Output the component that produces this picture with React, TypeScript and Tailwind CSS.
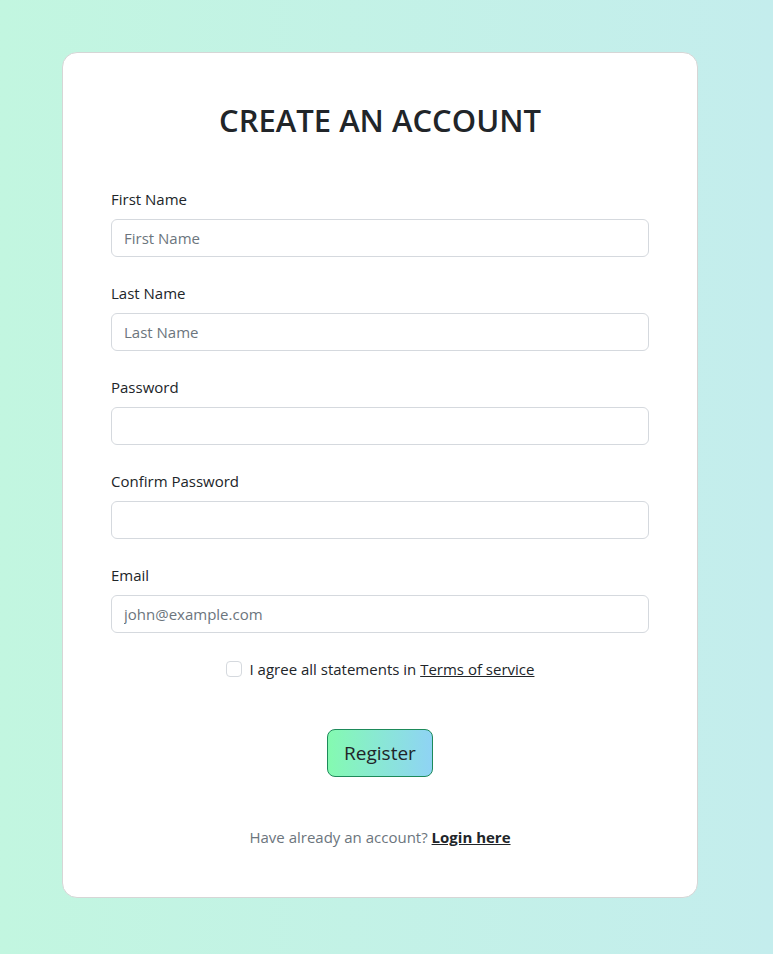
import React from "react";

const font = { fontFamily: '"Open Sans", "Noto Sans", sans-serif' };

function Field({ label, placeholder, type = "text" }: { label: string; placeholder?: string; type?: string }) {
  return (
    <div className="mb-6">
      <label className="mb-2 block text-[15px] leading-6 text-[#212529]">{label}</label>
      <input
        type={type}
        placeholder={placeholder}
        className="block h-[38px] w-full rounded-[6px] border border-[#d5d9de] bg-white px-3 text-[15px] leading-6 text-[#212529] outline-none placeholder:text-[#6c757d]"
      />
    </div>
  );
}

export default function App() {
  return (
    <div
      className="min-h-[954px] w-full bg-linear-to-r from-[#c2f6e0] to-[#c4eded] pl-[62px] pt-[52px] pb-[57px]"
      style={font}
    >
      <div className="w-[636px] rounded-[15px] border border-[#d6d6d6] bg-white p-12">
        <h2 className="mb-12 text-center text-[31px] font-semibold leading-[38px] text-[#212529]">
          CREATE AN ACCOUNT
        </h2>
        <Field label="First Name" placeholder="First Name" />
        <Field label="Last Name" placeholder="Last Name" />
        <Field label="Password" type="password" />
        <Field label="Confirm Password" type="password" />
        <Field label="Email" placeholder="john@example.com" type="email" />
        <div className="mb-12 flex items-center justify-center">
          <span className="mr-2 inline-block h-4 w-4 rounded-[4px] border border-[#d5d9de] bg-white" />
          <span className="text-[15px] leading-6 text-[#212529]">
            I agree all statements in <a className="underline">Terms of service</a>
          </span>
        </div>
        <div className="flex justify-center">
          <button className="h-12 w-[106px] rounded-[8px] border border-[#1d8a5a] bg-linear-to-r from-[#84fab0] to-[#8fd3f4] text-[19px] leading-[30px] text-[#212529]">
            Register
          </button>
        </div>
        <p className="mt-12 text-center text-[15px] leading-6 text-[#6c757d]">
          Have already an account? <a className="font-bold text-[#212529] underline">Login here</a>
        </p>
      </div>
    </div>
  );
}
